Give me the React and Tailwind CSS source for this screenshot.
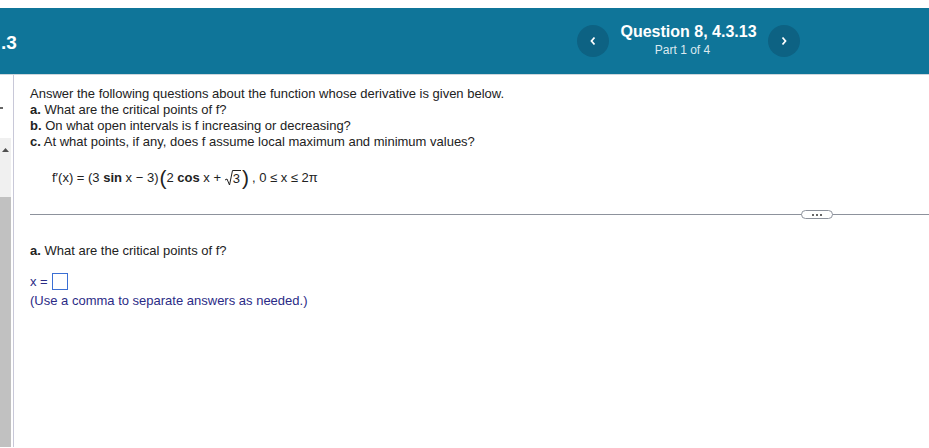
import React from 'react';

const font = { fontFamily: '"Liberation Sans", Arial, sans-serif' };

function Header() {
  return (
    <div className="pt-2 bg-white">
      <div className="relative h-[67px] bg-[#0f7599] border-b border-[#cdd6dc] flex items-center">
        <div className="absolute left-[1px] top-[25px] text-white font-bold text-[19px] leading-none">.3</div>
        <div className="ml-[577px] flex items-center">
          <button className="w-8 h-8 rounded-full bg-[#0d6283] flex items-center justify-center text-white">
            <svg width="8" height="10" viewBox="0 0 8 10" fill="none" stroke="white" strokeWidth="1.8">
              <path d="M5.5 1.5 L2.5 5 L5.5 8.5" />
            </svg>
          </button>
          <div className="w-[159px] flex flex-col items-center -mt-[2px]">
            <div className="text-white font-bold text-[16px] leading-[20px]">Question 8, 4.3.13</div>
            <div className="text-[#dbe9ef] text-[12px] leading-[16px] pr-[12px]">Part 1 of 4</div>
          </div>
          <button className="w-8 h-8 rounded-full bg-[#0d6283] flex items-center justify-center text-white">
            <svg width="8" height="10" viewBox="0 0 8 10" fill="none" stroke="white" strokeWidth="1.8">
              <path d="M2.5 1.5 L5.5 5 L2.5 8.5" />
            </svg>
          </button>
        </div>
      </div>
    </div>
  );
}

function SidePanel() {
  return (
    <div className="w-[14px] shrink-0 border-r border-[#c8c8d8] flex flex-col">
      <div className="h-[32px]" />
      <div className="w-[3px] h-[2px] bg-[#666]" />
      <div className="h-[29px]" />
      <div className="w-[11px] flex-1 bg-[#f0f0f0] flex flex-col">
        <div className="h-[23px] flex items-center justify-center">
          <svg width="7" height="4" viewBox="0 0 7 4"><path d="M0 4 L3.5 0 L7 4 Z" fill="#505050" /></svg>
        </div>
        <div className="h-[36px]" />
        <div className="flex-1 bg-[#c1c1c1]" />
      </div>
    </div>
  );
}

function Formula() {
  return (
    <div className="ml-[38px] mt-[15px] flex items-center h-[26px] text-[13px] text-[#222] whitespace-pre">
      <span>f′(x) = (3 </span>
      <span className="font-bold">sin</span>
      <span> x − 3)</span>
      <span className="text-[21px] font-light leading-none ml-[1px] -mt-[2px]">(</span>
      <span>2 </span>
      <span className="font-bold">cos</span>
      <span> x + </span>
      <span className="flex items-end">
        <svg width="8" height="16" viewBox="0 0 8 16" fill="none" stroke="#222" strokeWidth="1">
          <path d="M0 10 L2 9 L4.5 15 L7.5 0.5 L8 0.5" />
        </svg>
        <span className="border-t border-[#222] leading-[15px] pr-[1px]">3</span>
      </span>
      <span className="text-[21px] font-light leading-none ml-[1px] -mt-[2px]">)</span>
      <span className="ml-[3px]">, 0 ≤ x ≤ 2π</span>
    </div>
  );
}

export default function App() {
  return (
    <div className="w-[929px] h-[448px] overflow-hidden bg-white" style={font}>
      <Header />
      <div className="flex h-[372px]">
        <SidePanel />
        <div className="flex-1 pt-[11px]">
          <div className="pl-[16px] text-[13px] leading-[16px] text-[#222]">
            <div>Answer the following questions about the function whose derivative is given below.</div>
            <div><b>a.</b> What are the critical points of f?</div>
            <div><b>b.</b> On what open intervals is f increasing or decreasing?</div>
            <div><b>c.</b> At what points, if any, does f assume local maximum and minimum values?</div>
          </div>
          <Formula />
          <div className="ml-[16px] mt-[23px] relative h-px bg-[#8d929c]">
            <div className="absolute left-[771px] -top-[4px] w-[32px] h-[9px] rounded-full border border-[#8d929c] bg-white flex items-center justify-center gap-[2px]">
              <span className="w-[2px] h-[2px] bg-[#666]" />
              <span className="w-[2px] h-[2px] bg-[#666]" />
              <span className="w-[2px] h-[2px] bg-[#666]" />
            </div>
          </div>
          <div className="pl-[16px] mt-[28px] text-[13px] leading-[16px] text-[#222]">
            <div><b>a.</b> What are the critical points of f?</div>
            <div className="mt-[14px] flex items-center h-[17px] text-[#2b2b86]">
              <span>x =</span>
              <span className="ml-[4px] w-[16px] h-[17px] border border-[#3b6fd4] bg-white" />
            </div>
            <div className="mt-[3px] text-[#2b2b86]">(Use a comma to separate answers as needed.)</div>
          </div>
        </div>
      </div>
    </div>
  );
}
